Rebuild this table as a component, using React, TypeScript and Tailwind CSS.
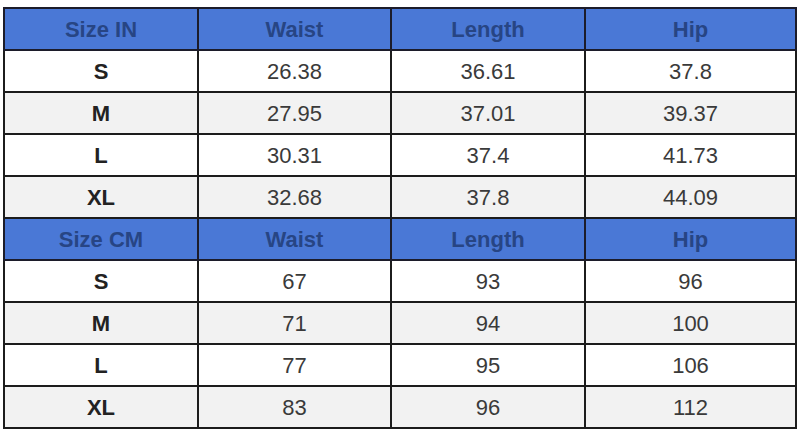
const headers = ['Waist', 'Length', 'Hip']

const inches = [
  ['S', '26.38', '36.61', '37.8'],
  ['M', '27.95', '37.01', '39.37'],
  ['L', '30.31', '37.4', '41.73'],
  ['XL', '32.68', '37.8', '44.09'],
]

const cm = [
  ['S', '67', '93', '96'],
  ['M', '71', '94', '100'],
  ['L', '77', '95', '106'],
  ['XL', '83', '96', '112'],
]

function HeaderRow({ label }: { label: string }) {
  return (
    <tr className="h-[42px] bg-[#4a78d6]">
      {[label, ...headers].map(h => (
        <th key={h} className="border-2 border-[#1c1c2a] text-[22px] font-bold text-[#274584] text-center">
          {h}
        </th>
      ))}
    </tr>
  )
}

function Rows({ rows }: { rows: string[][] }) {
  return (
    <>
      {rows.map((r, i) => (
        <tr key={r[0]} className={i % 2 === 1 ? 'h-[42px] bg-[#f2f2f2]' : 'h-[42px] bg-white'}>
          {r.map((c, j) => (
            <td
              key={j}
              className={
                j === 0
                  ? 'border-2 border-[#1c1c1c] text-center text-[22px] font-bold text-[#222]'
                  : 'border-2 border-[#1c1c1c] text-center text-[22px] text-[#3a3a3a]'
              }
            >
              {c}
            </td>
          ))}
        </tr>
      ))}
    </>
  )
}

export default function App() {
  return (
    <div className="w-[805px] h-[433px] bg-white pt-[7px] pl-[3px] font-['Liberation_Sans',Arial,sans-serif]">
      <table className="border-collapse w-[792px] table-fixed">
        <colgroup>
          <col className="w-[194px]" />
          <col className="w-[193px]" />
          <col className="w-[194px]" />
          <col className="w-[211px]" />
        </colgroup>
        <tbody>
          <HeaderRow label="Size IN" />
          <Rows rows={inches} />
          <HeaderRow label="Size CM" />
          <Rows rows={cm} />
        </tbody>
      </table>
    </div>
  )
}
